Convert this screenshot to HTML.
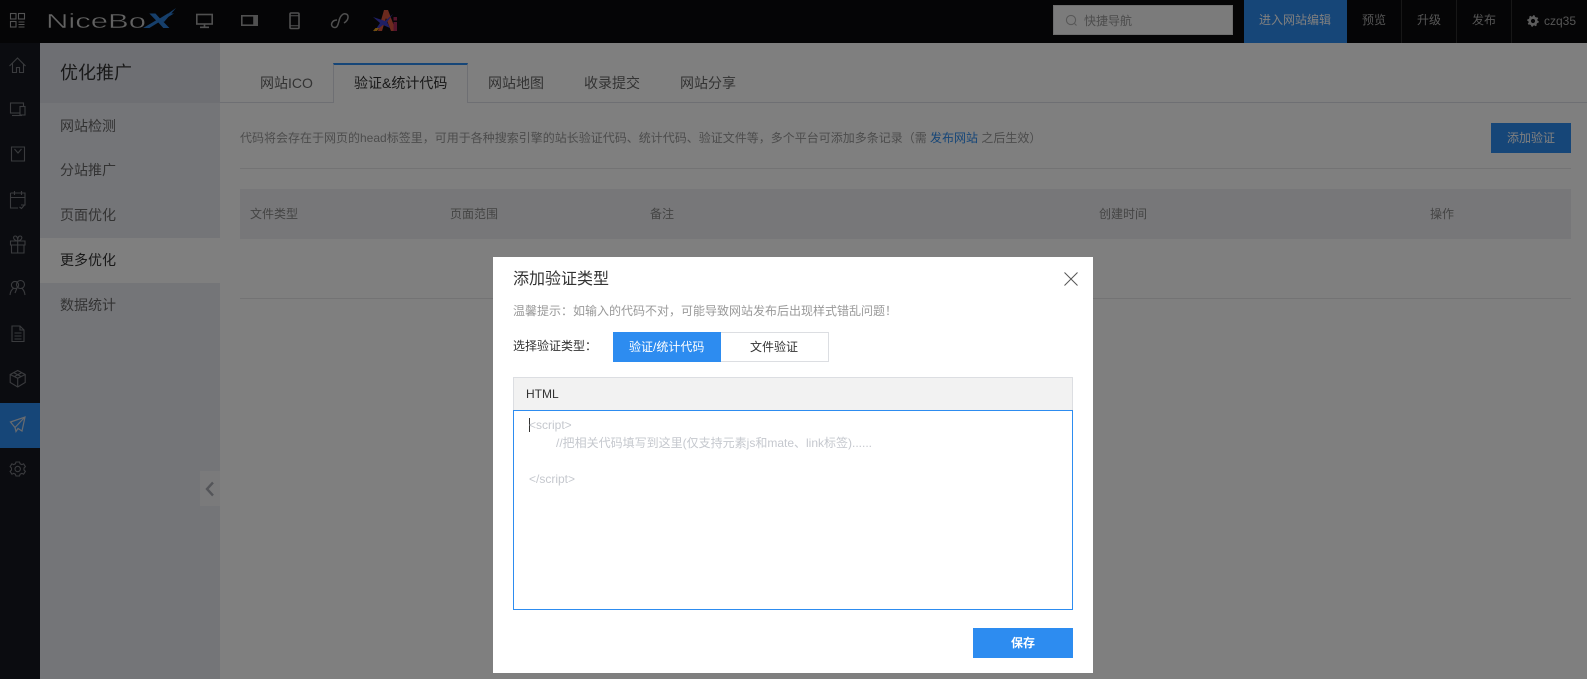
<!DOCTYPE html>
<html lang="zh"><head><meta charset="utf-8"><title>优化推广</title>
<style>
*{box-sizing:border-box}
html,body{margin:0;padding:0}
body{width:1587px;height:679px;overflow:hidden;position:relative;background:#fff;font:12px/1 "Liberation Sans","Noto Sans CJK SC",sans-serif;color:#333}
.a{position:absolute;white-space:pre}
.t{position:absolute;white-space:pre;line-height:20px;height:20px}
svg{position:absolute;overflow:visible;fill:none}
</style></head><body>

<!-- top bar -->
<div class="a" style="left:0;top:0;width:1587px;height:43px;background:#0b0b0c"></div>
<svg style="left:0;top:0" width="40" height="43" stroke="#a4a4a4" stroke-width="1.1">
<rect x="10.500" y="13.500" width="5.500" height="5.500"/><rect x="18.500" y="13.500" width="6" height="5.500"/><rect x="10.500" y="21.500" width="5.500" height="5.500"/><path d="M18.500 22h6M18.500 24.500h6M18.500 27h6"/>
</svg>
<!-- logo -->
<svg style="left:46px;top:0" width="134" height="43">
<text x="0" y="28" font-family="Liberation Sans" font-size="20" textLength="100" lengthAdjust="spacingAndGlyphs" fill="#c4c4c4" stroke="#0b0b0c" stroke-width=".4">NiceBo</text>
<text x="99" y="28" font-family="Liberation Sans" font-weight="bold" font-style="italic" font-size="21" textLength="27" lengthAdjust="spacingAndGlyphs" fill="#2d7fd6">X</text>
<path d="M113 20L130 8L118 22Z" fill="#2d7fd6"/>
</svg>
<!-- top icons -->
<svg style="left:180px;top:0" width="230" height="43" stroke="#a0a0a0" stroke-width="1.600">
<rect x="16.800" y="14.500" width="15.400" height="9.500"/><path d="M24.500 24v3M20 27.300h9"/>
<rect x="61.800" y="15.800" width="15.400" height="9.400"/><path d="M74 15.800h3.200v9.400H74z" fill="#a0a0a0"/>
<rect x="110" y="13" width="9" height="15.500" rx="1"/><path d="M110 15.800h9M110 25.800h9" stroke-width="1"/>
<path d="M157 20C152 20 150 25 153 27C157 29 158 25 159 21C160 16 163 13 166 14C169 15 169 20 164 23" stroke-width="1.500"/>
<path d="M198 31L204 10H208L216 31H211L206 18L202 31Z" fill="#d8543c" stroke="none"/>
<path d="M193 17l12 4 8-7-6 8 3 6-7-3-9 7 6-9z" fill="#3e3ec8" stroke="none"/>
<path d="M193 31l2.500-3h3.500l-2 3z" fill="#e6a020" stroke="none"/>
<path d="M213.500 22h3.500v9h-3.500zM213.500 17h3.500v3.500h-3.500z" fill="#a82858" stroke="none"/>
</svg>
<div class="a" style="left:1053px;top:5px;width:180px;height:30px;background:#f6f6f6;border:1px solid #dcdcdc"></div>
<svg style="left:1065px;top:14px" width="13" height="13" stroke="#b0b0b0" stroke-width="1.100"><circle cx="6" cy="6" r="4.600"/><path d="M9.500 9.500l2 2"/></svg>
<div class="t" style="left:1084px;top:11px;color:#999">快捷导航</div>
<div class="a" style="left:1244px;top:0;width:103px;height:43px;background:#2d8cf0"></div>
<div class="t" style="left:1259px;top:10px;color:#fff">进入网站编辑</div>
<div class="a" style="left:1401px;top:0;width:1px;height:43px;background:#2e2e2e"></div>
<div class="a" style="left:1456px;top:0;width:1px;height:43px;background:#2e2e2e"></div>
<div class="a" style="left:1511px;top:0;width:1px;height:43px;background:#2e2e2e"></div>
<div class="t" style="left:1362px;top:10px;color:#aaa">预览</div>
<div class="t" style="left:1417px;top:10px;color:#aaa">升级</div>
<div class="t" style="left:1472px;top:10px;color:#aaa">发布</div>
<svg style="left:1527px;top:15px" width="12" height="12"><circle cx="6" cy="6" r="3.400" stroke="#bbb" stroke-width="2.600"/><circle cx="6" cy="6" r="5" stroke="#bbb" stroke-width="1.400" stroke-dasharray="1.900 2"/></svg>
<div class="t" style="left:1544px;top:11px;color:#aaa">czq35</div>

<!-- left rail -->
<div class="a" style="left:0;top:43px;width:40px;height:636px;background:#171920"></div>
<div class="a" style="left:0;top:403px;width:40px;height:45px;background:#2d8cf0"></div>
<svg style="left:0;top:43px" width="40" height="636" stroke="#74767c" stroke-width="1.100">
<path d="M9.500 23l8-8 8 8M12.500 20.500v9h4v-5h3v5h4v-9"/>
<rect x="10.500" y="60" width="13" height="10"/><path d="M12 72.500h10"/><rect x="20" y="63.500" width="5" height="8.500" fill="#171920"/>
<path d="M11.500 104h13v14h-13zM14.500 106l3.500 4 3.500-4"/>
<path d="M10.500 150h14.500v12h-4M18 165h-7.500v-15M10.500 154.500h14.500M14.500 148v4M21.500 148v4M19.500 164l2 1.500 3-3.500"/>
<g transform="translate(0,-2)"><path d="M10.500 200h14.500v4h-14.500zM11.500 204h12.500v8h-12.500zM17.700 200v12M17.700 200c-5-1-5-5-2.500-5s2.500 3 2.500 5c0-2 0-5 2.500-5s2.500 4-2.500 5"/></g>
<g transform="translate(0,1)"><circle cx="15" cy="241" r="3.600"/><circle cx="20.500" cy="240.500" r="4"/><path d="M10 251c.5-4 2-6 4-7M25 251c-.5-4-2-6-3.500-7M15 249l2-5"/></g>
<g transform="translate(0,-2)"><path d="M12 285h8l4 4v11.500h-12zM20 285v4h4M14.500 292h7M14.500 295h7M14.500 298h7"/></g>
<g transform="translate(0,-2)"><path d="M17.700 329.500l7.500 4v8l-7.500 4.500-7.500-4.500v-8zM10.200 333.500l7.500 3.800 7.500-3.800M17.700 337.300v8.700M13.500 331.500l7.500 4M22 331.500l-7.500 4"/></g>
<g transform="translate(0,4)"><path d="M10.500 375l14.500-5-3 14-4-2.500-2 3-1-4zM15 380.500l10-10.500" stroke="#d0d6e0" stroke-width="1.200"/></g>
<circle cx="17.700" cy="426" r="2.700"/><path d="M16 419h3.500l.6 1.800 1.800.8 1.700-.8 1.800 2.900-1.400 1.300v2l1.400 1.300-1.800 2.900-1.700-.8-1.800.8-.6 1.800H16l-.6-1.800-1.800-.8-1.700.8-1.800-2.900 1.400-1.300v-2l-1.400-1.300 1.800-2.900 1.700.8 1.800-.8z"/>
</svg>

<!-- second sidebar -->
<div class="a" style="left:40px;top:43px;width:180px;height:636px;background:#e9eaf0"></div>
<div class="a" style="left:40px;top:43px;width:180px;height:60px;background:#dcdee7"></div>
<div class="t" style="left:60px;top:62px;font-size:18px;line-height:22px;height:22px;color:#333">优化推广</div>
<div class="a" style="left:40px;top:238px;width:180px;height:45px;background:#fff"></div>
<div class="t" style="left:60px;top:116px;font-size:14px;color:#666">网站检测</div>
<div class="t" style="left:60px;top:160px;font-size:14px;color:#666">分站推广</div>
<div class="t" style="left:60px;top:205px;font-size:14px;color:#666">页面优化</div>
<div class="t" style="left:60px;top:250px;font-size:14px;color:#333">更多优化</div>
<div class="t" style="left:60px;top:295px;font-size:14px;color:#666">数据统计</div>
<div class="a" style="left:200px;top:471px;width:20px;height:35px;background:#f5f5f7"></div>
<svg style="left:205px;top:481px" width="10" height="16" stroke="#a9abb3" stroke-width="2.400"><path d="M8 1.500L2 8l6 6.500"/></svg>

<!-- tabs -->
<div class="a" style="left:220px;top:102px;width:1367px;height:1px;background:#dcdee7"></div>
<div class="a" style="left:333px;top:63px;width:135px;height:40px;background:#fff;border:1px solid #dcdee7;border-top:2px solid #2d8cf0;border-bottom:0"></div>
<div class="t" style="left:260px;top:73px;font-size:14px;color:#666">网站ICO</div>
<div class="t" style="left:354px;top:73px;font-size:14px;color:#333">验证&amp;统计代码</div>
<div class="t" style="left:488px;top:73px;font-size:14px;color:#666">网站地图</div>
<div class="t" style="left:584px;top:73px;font-size:14px;color:#666">收录提交</div>
<div class="t" style="left:680px;top:73px;font-size:14px;color:#666">网站分享</div>

<div class="t" style="left:240px;top:128px;color:#999">代码将会存在于网页的head标签里，可用于各种搜索引擎的站长验证代码、统计代码、验证文件等，多个平台可添加多条记录（需 <span style="color:#2d8cf0">发布网站</span> 之后生效）</div>
<div class="a" style="left:1491px;top:123px;width:80px;height:30px;background:#2d8cf0"></div>
<div class="t" style="left:1507px;top:128px;color:#fff">添加验证</div>
<div class="a" style="left:240px;top:168px;width:1331px;height:1px;background:#e6e6e9"></div>
<div class="a" style="left:240px;top:189px;width:1331px;height:50px;background:#eeeff3"></div>
<div class="t" style="left:250px;top:204px;color:#888">文件类型</div>
<div class="t" style="left:450px;top:204px;color:#888">页面范围</div>
<div class="t" style="left:650px;top:204px;color:#888">备注</div>
<div class="t" style="left:1099px;top:204px;color:#888">创建时间</div>
<div class="t" style="left:1430px;top:204px;color:#888">操作</div>
<div class="a" style="left:240px;top:298px;width:1331px;height:1px;background:#e6e6e9"></div>

<!-- overlay -->
<div class="a" style="left:0;top:0;width:1587px;height:679px;background:rgba(0,0,0,.5)"></div>

<!-- modal -->
<div class="a" style="left:493px;top:257px;width:600px;height:416px;background:#fff"></div>
<div class="t" style="left:513px;top:270px;font-size:16px;color:#333">添加验证类型</div>
<svg style="left:1064px;top:272px" width="14" height="14" stroke="#555" stroke-width="1"><path d="M.5.500l13 13M13.500.500l-13 13"/></svg>
<div class="t" style="left:513px;top:301px;color:#999">温馨提示：如输入的代码不对，可能导致网站发布后出现样式错乱问题！</div>
<div class="t" style="left:513px;top:336px;color:#333">选择验证类型：</div>
<div class="a" style="left:613px;top:332px;width:216px;height:30px;border:1px solid #dcdee2"></div>
<div class="a" style="left:613px;top:332px;width:108px;height:30px;background:#2d8cf0"></div>
<div class="t" style="left:629px;top:337px;color:#fff">验证/统计代码</div>
<div class="t" style="left:750px;top:337px;color:#333">文件验证</div>
<div class="a" style="left:513px;top:377px;width:560px;height:34px;background:#f2f2f2;border:1px solid #dcdee2"></div>
<div class="t" style="left:526px;top:384px;color:#333">HTML</div>
<div class="a" style="left:513px;top:410px;width:560px;height:200px;background:#fff;border:1px solid #2d8cf0"></div>
<div class="a" style="left:529px;top:418px;width:1px;height:14px;background:#333"></div>
<div class="t" style="left:529px;top:415px;color:#c5c8ce">&lt;script&gt;</div>
<div class="t" style="left:556px;top:433px;color:#c5c8ce">//把相关代码填写到这里(仅支持元素js和mate、link标签)......</div>
<div class="t" style="left:529px;top:469px;color:#c5c8ce">&lt;/script&gt;</div>
<div class="a" style="left:973px;top:628px;width:100px;height:30px;background:#2d8cf0"></div>
<div class="t" style="left:1011px;top:633px;color:#fff;font-weight:bold">保存</div>
</body></html>
